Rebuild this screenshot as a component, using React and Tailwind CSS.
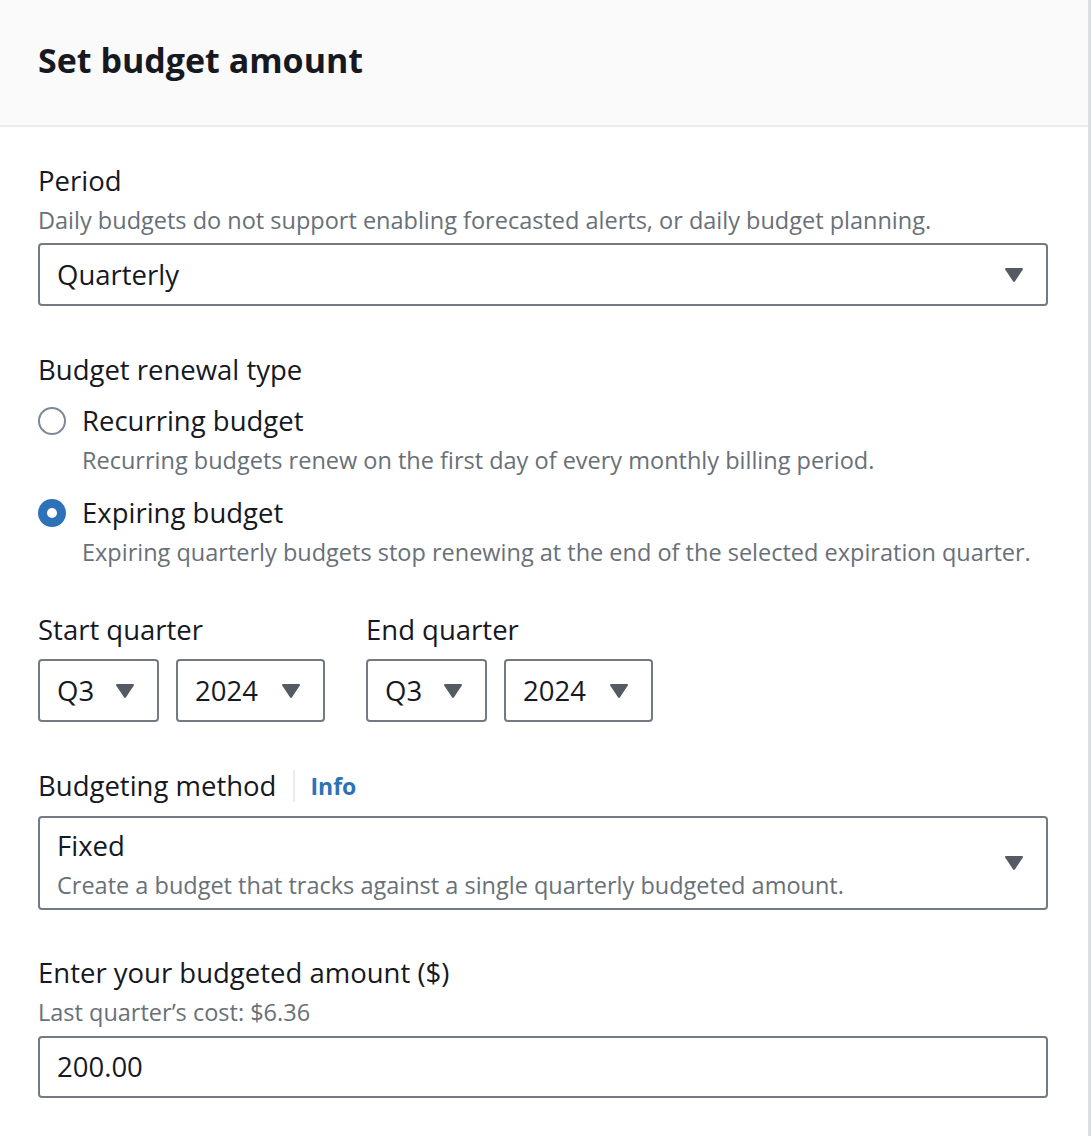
import React from "react";

const Caret = () => (
  <svg width="20" height="16" viewBox="0 0 20 16" className="shrink-0">
    <path d="M2 2 L18 2 L10 14 Z" fill="#545b64" stroke="#545b64" strokeWidth="2" strokeLinejoin="round" />
  </svg>
);

const SmallSelect = ({ value, w }) => (
  <div className={`${w} h-[63px] border-2 border-[#737a84] rounded-[4px] flex items-center justify-between pl-[17px] pr-[22px]`}>
    <span className="text-[27.5px] text-[#16191f]">{value}</span>
    <Caret />
  </div>
);

export default function App() {
  return (
    <div className="w-[1092px] h-[1136px] bg-white" style={{ fontFamily: '"Open Sans", "Noto Sans", sans-serif' }}>
      <div className="w-[1091px] h-full border-r-[3px] border-[#dcdfe2] bg-white">
        <div className="h-[127px] bg-[#fafafa] border-b-2 border-[#eaeded] pl-[38px] pt-[38px]">
          <h2 className="text-[34px] leading-[44px] font-bold text-[#16191f]">Set budget amount</h2>
        </div>
        <div className="pl-[38px] pr-[40px] pt-[36px]">
          <div className="text-[27.5px] leading-[36px] text-[#16191f]">Period</div>
          <div className="mt-[5px] text-[23.5px] leading-[32px] text-[#687078]">
            Daily budgets do not support enabling forecasted alerts, or daily budget planning.
          </div>
          <div className="mt-[7px] h-[63px] border-2 border-[#737a84] rounded-[4px] flex items-center justify-between pl-[17px] pr-[22px]">
            <span className="text-[27.5px] text-[#16191f]">Quarterly</span>
            <Caret />
          </div>

          <div className="mt-[46px] text-[27.5px] leading-[36px] text-[#16191f]">Budget renewal type</div>

          <div className="mt-[15px] flex items-center gap-[16px]">
            <div className="w-[28px] h-[28px] rounded-full border-2 border-[#7d8998] bg-white shrink-0" />
            <span className="text-[27.5px] leading-[36px] text-[#16191f]">Recurring budget</span>
          </div>
          <div className="mt-[5px] pl-[44px] text-[23.5px] leading-[32px] text-[#687078]">
            Recurring budgets renew on the first day of every monthly billing period.
          </div>

          <div className="mt-[19px] flex items-center gap-[16px]">
            <div className="w-[28px] h-[28px] rounded-full border-[9px] border-[#2d72b8] bg-white shrink-0" />
            <span className="text-[27.5px] leading-[36px] text-[#16191f]">Expiring budget</span>
          </div>
          <div className="mt-[5px] pl-[44px] text-[23.5px] leading-[32px] text-[#687078]">
            Expiring quarterly budgets stop renewing at the end of the selected expiration quarter.
          </div>

          <div className="mt-[44px] flex gap-[41px]">
            <div>
              <div className="text-[27.5px] leading-[36px] text-[#16191f]">Start quarter</div>
              <div className="mt-[11px] flex gap-[17px]">
                <SmallSelect value="Q3" w="w-[121px]" />
                <SmallSelect value="2024" w="w-[149px]" />
              </div>
            </div>
            <div>
              <div className="text-[27.5px] leading-[36px] text-[#16191f]">End quarter</div>
              <div className="mt-[11px] flex gap-[17px]">
                <SmallSelect value="Q3" w="w-[121px]" />
                <SmallSelect value="2024" w="w-[149px]" />
              </div>
            </div>
          </div>

          <div className="mt-[46px] flex items-center h-[36px]">
            <span className="text-[27.5px] leading-[36px] text-[#16191f]">Budgeting method</span>
            <span className="ml-[17px] w-[2px] h-[32px] bg-[#eaeded]" />
            <span className="ml-[15px] text-[23px] leading-[36px] font-bold text-[#2d72b8]">Info</span>
          </div>
          <div className="mt-[12px] h-[94px] border-2 border-[#737a84] rounded-[4px] flex items-center justify-between pl-[17px] pr-[22px]">
            <div className="flex flex-col gap-[5px] pt-[2px]">
              <span className="text-[27.5px] leading-[36px] text-[#16191f]">Fixed</span>
              <span className="text-[23.5px] leading-[32px] text-[#687078]">
                Create a budget that tracks against a single quarterly budgeted amount.
              </span>
            </div>
            <Caret />
          </div>

          <div className="mt-[45px] text-[27.5px] leading-[36px] text-[#16191f]">Enter your budgeted amount ($)</div>
          <div className="mt-[5px] text-[23.5px] leading-[32px] text-[#687078]">Last quarter’s cost: $6.36</div>
          <div className="mt-[8px] h-[62px] border-2 border-[#737a84] rounded-[4px] flex items-center pl-[17px]">
            <span className="text-[27.5px] text-[#16191f]">200.00</span>
          </div>
        </div>
      </div>
    </div>
  );
}
